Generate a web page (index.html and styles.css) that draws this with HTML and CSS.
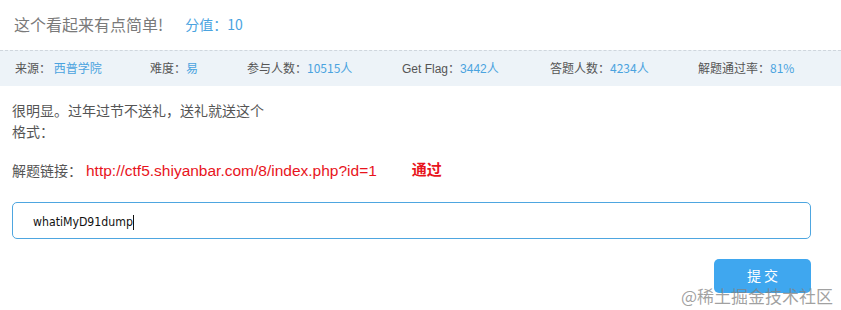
FILE: index.html
```html
<!DOCTYPE html>
<html lang="zh-CN">
<head>
  <meta charset="UTF-8">
  <title>这个看起来有点简单!</title>
  <link rel="stylesheet" href="styles.css">
</head>
<body>
  <div class="header">
    <span class="title">这个看起来有点简单!</span>
    <span class="score">分值：10</span>
  </div>

  <div class="stats">
    <span class="stat s1">来源： <b>西普学院</b></span>
    <span class="stat s2">难度：<b>易</b></span>
    <span class="stat s3">参与人数：<b>10515人</b></span>
    <span class="stat s4">Get Flag：<b>3442人</b></span>
    <span class="stat s5">答题人数：<b>4234人</b></span>
    <span class="stat s6">解题通过率：<b>81%</b></span>
  </div>

  <div class="desc">
    <p>很明显。过年过节不送礼，送礼就送这个<br>格式：</p>
    <p class="link-row">解题链接：<a href="#">http://ctf5.shiyanbar.com/8/index.php?id=1</a><span class="pass">通过</span></p>
  </div>

  <div class="answer">
    <div class="input">whatiMyD91dump<span class="caret"></span></div>
  </div>

  <div class="actions">
    <button class="submit">提 交</button>
  </div>

  <div class="watermark">@稀土掘金技术社区</div>
</body>
</html>
```

FILE: styles.css
```css
body {
  margin: 0;
  background: #fff;
  font-family: "Noto Sans CJK SC", "Liberation Sans", sans-serif;
  color: #555;
  position: relative;
  height: 310px;
  overflow: hidden;
}

.header {
  height: 48px;
  display: flex;
  align-items: center;
  padding-left: 14px;
  padding-bottom: 2px;
}

.title {
  font-size: 16px;
  color: #7a7a7a;
}

.score {
  margin-left: 22px;
  font-size: 14px;
  color: #4aa3df;
}

.stats {
  border-top: 1px dashed #cfd6dd;
  background: #edf3f8;
  height: 36px;
  display: flex;
  align-items: center;
  font-size: 12px;
  color: #555;
  padding-bottom: 3px;
  box-sizing: border-box;
}

.stat b {
  font-weight: normal;
  color: #4aa3df;
}

.s1 { margin-left: 15px; width: 135px; }
.s2 { width: 97px; }
.s3 { width: 155px; }
.s4 { width: 148px; font-family: "Liberation Sans", "Noto Sans CJK SC", sans-serif; }
.s5 { width: 148px; }

.desc {
  padding: 14px 12px 0;
  font-size: 14px;
  color: #555;
}

.desc p {
  margin: 0;
  line-height: 21px;
}

.link-row {
  margin-top: 18px !important;
  display: flex;
  align-items: center;
}

.link-row a {
  color: #e8141c;
  text-decoration: none;
  font-size: 15.5px;
  font-family: "Liberation Sans", sans-serif;
  margin-left: 4px;
}

.pass {
  color: #e8141c;
  font-weight: bold;
  font-size: 15px;
  margin-left: 35px;
  margin-top: -4px;
}

.answer {
  padding: 21px 30px 0 12px;
}

.input {
  height: 34px;
  border: 1px solid #4ea6e0;
  border-radius: 5px;
  display: flex;
  align-items: center;
  padding-left: 20px;
  padding-top: 3px;
  box-sizing: border-box;
  height: 37px;
  font-size: 12.2px;
  color: #111;
  font-family: "DejaVu Sans Condensed", "DejaVu Sans", sans-serif;
  font-stretch: condensed;
}

.caret {
  display: inline-block;
  width: 1px;
  height: 15px;
  background: #111;
}

.actions {
  display: flex;
  justify-content: flex-end;
  padding: 20px 30px 0 0;
}

.submit {
  width: 97px;
  height: 34px;
  border: none;
  border-radius: 5px;
  background: #3fa7ef;
  color: #fff;
  font-size: 14px;
  font-family: "Noto Sans CJK SC", sans-serif;
  padding-bottom: 4px;
}

.watermark {
  position: absolute;
  right: 8px;
  top: 283px;
  font-size: 17px;
  font-family: "Noto Sans CJK SC", serif;
  color: rgba(130, 130, 130, 0.75);
}
```
